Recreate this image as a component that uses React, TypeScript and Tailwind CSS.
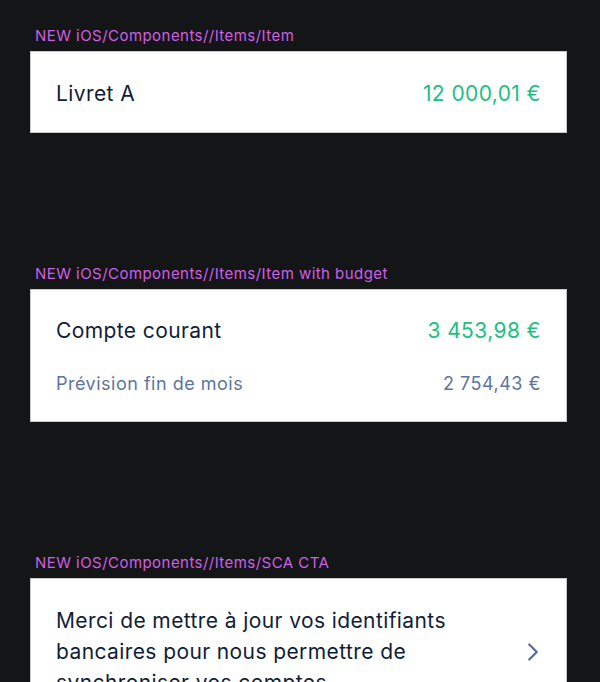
import { ChevronRight } from "lucide-react";

const font = { fontFamily: "Inter, 'Noto Sans', sans-serif" };

function Label({ children }: { children: React.ReactNode }) {
  return (
    <p className="pl-[35px] text-[15px] leading-[22px] tracking-[0.45px] text-[#cf5fe3] mb-[4px]">{children}</p>
  );
}

export default function App() {
  return (
    <div className="w-[600px] h-[682px] overflow-hidden bg-[#141517] pt-[25px]" style={font}>
      <Label>NEW iOS/Components//Items/Item</Label>
      <div className="mx-[30px] w-[537px] h-[82px] bg-white border border-[#c9c9c9] flex items-center justify-between px-[25px] pt-[4px] tracking-[0.4px]">
        <span className="text-[21px] text-[#0f1e38]">Livret A</span>
        <span className="text-[21px] text-[#1cc07f]">12 000,01 €</span>
      </div>

      <div className="h-[130px]" />

      <Label>NEW iOS/Components//Items/Item with budget</Label>
      <div className="mx-[30px] w-[537px] h-[133px] bg-white border border-[#c9c9c9] flex flex-col justify-center px-[25px] pt-[4px] gap-[25px]">
        <div className="flex items-center justify-between leading-[28px] tracking-[0.4px]">
          <span className="text-[21px] text-[#0f1e38]">Compte courant</span>
          <span className="text-[21px] text-[#1cc07f]">3 453,98 €</span>
        </div>
        <div className="flex items-center justify-between leading-[28px] tracking-[0.5px]">
          <span className="text-[18px] text-[#5d75a0]">Prévision fin de mois</span>
          <span className="text-[18px] text-[#5d75a0]">2 754,43 €</span>
        </div>
      </div>

      <div className="h-[130px]" />

      <Label>NEW iOS/Components//Items/SCA CTA</Label>
      <div className="mx-[30px] w-[537px] bg-white border border-[#c9c9c9] flex items-center justify-between pl-[25px] pr-[18px] pt-[26px] pb-[26px]">
        <p className="text-[21px] leading-[31px] tracking-[0.4px] text-[#0f1e38] w-[420px]">
          Merci de mettre à jour vos identifiants bancaires pour nous permettre de synchroniser vos comptes.
        </p>
        <ChevronRight size={30} strokeWidth={1.7} className="text-[#4d6c9c]" />
      </div>
    </div>
  );
}
